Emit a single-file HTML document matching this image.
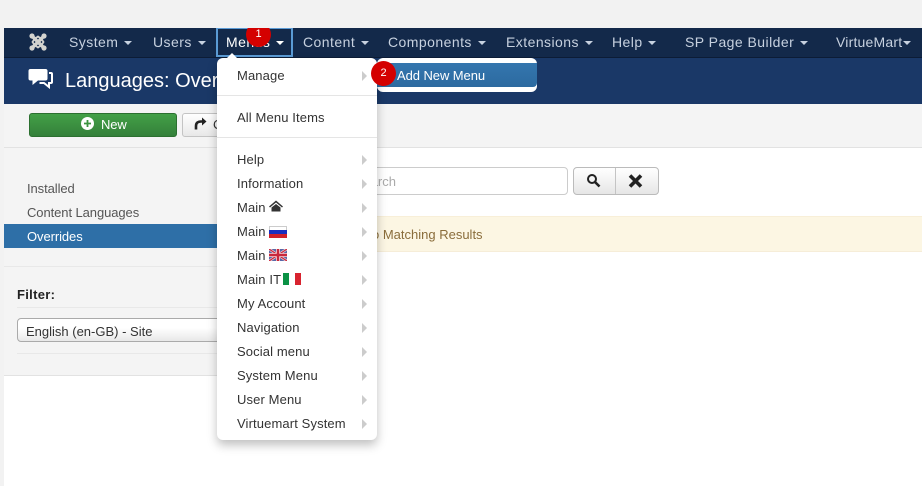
<!DOCTYPE html>
<html><head><meta charset="utf-8">
<style>
html,body{margin:0;padding:0;width:922px;height:486px;overflow:hidden;background:#fff;font-family:"Liberation Sans",sans-serif;font-size:13px;color:#333}
.a{position:absolute;white-space:nowrap}
.nav{position:absolute;top:28px;line-height:28px;font-size:14px;color:#c7d1df;white-space:nowrap;letter-spacing:.45px}
.nav i{display:inline-block;width:0;height:0;border-left:4px solid transparent;border-right:4px solid transparent;border-top:4px solid #c7d1df;vertical-align:middle;margin-left:1.5px}
.m{position:absolute;left:237px;font-size:13px;line-height:20px;color:#333;white-space:nowrap;letter-spacing:.12px}
.ar{position:absolute;left:362px;width:0;height:0;border-left:5px solid #ccc;border-top:5px solid transparent;border-bottom:5px solid transparent}
.side{position:absolute;left:27px;font-size:13px;line-height:20px;color:#555;letter-spacing:-.08px}
.hr{position:absolute;left:217px;width:160px;height:1px;background:#e5e5e5}
svg{position:absolute;display:block}
.b{position:absolute;border-radius:50%;background:#d40000;color:#fff;text-align:center;font-size:11px}
</style></head><body>
<div class="a" style="left:0;top:0;width:922px;height:28px;background:#f2f2f2"></div>
<div class="a" style="left:0;top:0;width:4px;height:486px;background:#f2f2f2"></div>
<div class="a" style="left:4px;top:28px;width:918px;height:30px;background:#13294a"></div>
<div class="a" style="left:4px;top:57px;width:918px;height:1px;background:#0c1c36"></div>
<div class="a" style="left:4px;top:58px;width:918px;height:46px;background:#1a3867"></div>
<div class="a" style="left:4px;top:104px;width:918px;height:43px;background:#f4f4f4"></div>
<div class="a" style="left:4px;top:147px;width:918px;height:1px;background:#e2e2e2"></div>
<div class="a" style="left:4px;top:148px;width:213px;height:227px;background:#f4f4f4"></div>
<div class="a" style="left:4px;top:375px;width:213px;height:1px;background:#e2e2e2"></div>

<svg style="left:29px;top:33px" width="18" height="18" viewBox="0 0 18 18"><path d="M3 3L15 15M15 3L3 15" stroke="#d3d3cf" stroke-width="3.4" fill="none"/><path d="M5.500 6L9 3.500L12.500 6L14.500 9L12.500 12L9 14.500L5.500 12L3.500 9Z" fill="none" stroke="#d3d3cf" stroke-width="1.800"/><g fill="#d3d3cf"><circle cx="3" cy="3" r="2.600"/><circle cx="15" cy="3" r="2.600"/><circle cx="3" cy="15" r="2.600"/><circle cx="15" cy="15" r="2.600"/></g></svg>

<div class="nav" style="left:69px">System <i></i></div>
<div class="nav" style="left:153px">Users <i></i></div>
<div class="nav" style="left:226px;color:#fff">Menus <i style="border-top-color:#fff"></i></div>
<div class="nav" style="left:303px">Content <i></i></div>
<div class="nav" style="left:388px">Components <i></i></div>
<div class="nav" style="left:506px">Extensions <i></i></div>
<div class="nav" style="left:612px">Help <i></i></div>
<div class="nav" style="left:685px">SP Page Builder <i></i></div>
<div class="nav" style="left:836px;letter-spacing:.2px">VirtueMart<i style="margin-left:1px"></i></div>
<div class="a" style="left:216px;top:28px;width:73px;height:26px;border:2px solid #5b9bd5;border-top-width:1px"></div>
<div class="a" style="left:240px;top:28px;width:36px;height:20px;overflow:hidden"><div class="b" style="left:6px;top:-6px;width:25px;height:25px;line-height:24px">1</div></div>

<svg style="left:28px;top:68px" width="25" height="22" viewBox="0 0 25 22"><path d="M2.500 1H17.500Q19.500 1 19.500 3V10.500Q19.500 12.500 17.500 12.500H10L4.500 17V12.500H2.500Q0.500 12.500 0.500 10.500V3Q0.500 1 2.500 1Z" fill="#fff"/><path d="M21 5H23Q24 5 24 6V14Q24 15 23 15H21V19L16 15H11.500" fill="none" stroke="#fff" stroke-width="2"/></svg>
<div class="a" style="left:65px;top:68px;font-size:20px;line-height:26px;color:#fff">Languages: Overrides</div>

<div class="a" style="left:29px;top:113px;width:146px;height:22px;border:1px solid #2c7030;border-radius:3px;background:linear-gradient(#43a047,#34803a)"></div>
<svg style="left:81px;top:117px" width="13" height="13" viewBox="0 0 13 13"><circle cx="6.500" cy="6.500" r="6.500" fill="#fff"/><path d="M6.500 3V10M3 6.500H10" stroke="#3c9440" stroke-width="1.800"/></svg>
<div class="a" style="left:101px;top:115px;line-height:20px;color:#fff;font-size:13px;letter-spacing:-.1px">New</div>
<div class="a" style="left:182px;top:113px;width:60px;height:22px;border:1px solid #c4c4c4;border-radius:3px;background:linear-gradient(#fff,#e8e8e8)"></div>
<svg style="left:193px;top:117px" width="14" height="14" viewBox="0 0 14 14"><path d="M3 12.500V9Q3 4.500 8 4.500H10" fill="none" stroke="#222" stroke-width="2.600"/><path d="M9 0.500L13.500 4.500L9 8.500Z" fill="#222"/></svg>
<div class="a" style="left:213px;top:115px;line-height:20px">Close</div>

<div class="side" style="top:179px">Installed</div>
<div class="side" style="top:203px">Content Languages</div>
<div class="a" style="left:4px;top:224px;width:213px;height:24px;background:#2e6fa7"></div>
<div class="side" style="top:227px;color:#fff">Overrides</div>
<div class="a" style="left:4px;top:266px;width:213px;height:1px;background:#e8e8e8"></div>
<div class="a" style="left:17px;top:285px;font-size:13px;line-height:20px;font-weight:bold;color:#222;letter-spacing:.3px">Filter:</div>
<div class="a" style="left:17px;top:307px;width:200px;height:1px;background:#e8e8e8"></div>
<div class="a" style="left:17px;top:318px;width:220px;height:22px;border:1px solid #aaa;border-radius:4px;background:linear-gradient(#fff 40%,#e8e8e8)"></div>
<div class="a" style="left:26px;top:322px;line-height:20px;color:#333;font-size:13px;letter-spacing:0">English (en-GB) - Site</div>
<div class="a" style="left:17px;top:353px;width:200px;height:1px;background:#e8e8e8"></div>

<div class="a" style="left:300px;top:167px;width:266px;height:26px;border:1px solid #ccc;border-radius:4px;background:#fff"></div>
<div class="a" style="left:310px;top:172px;line-height:20px;color:#aaa;font-size:13px;width:86px;text-align:right">Search</div>
<div class="a" style="left:573px;top:167px;width:84px;height:26px;border:1px solid #bbb;border-radius:4px;background:linear-gradient(#fff,#e6e6e6)"></div>
<div class="a" style="left:615px;top:168px;width:1px;height:26px;background:#c4c4c4"></div>
<svg style="left:586px;top:173px" width="15" height="15" viewBox="0 0 15 15"><circle cx="6" cy="6" r="4" fill="none" stroke="#222" stroke-width="2"/><path d="M9 9L13.500 13.500" stroke="#222" stroke-width="2.600"/></svg>
<svg style="left:628px;top:174px" width="15" height="14" viewBox="0 0 15 14"><path d="M2 1.500L13 12.500M13 1.500L2 12.500" stroke="#222" stroke-width="3.600"/></svg>

<div class="a" style="left:300px;top:216px;width:622px;height:36px;background:#fcf6e3;box-sizing:border-box;border-top:1px solid #f8efd8;border-bottom:1px solid #f6edd8"></div>
<div class="a" style="left:372px;top:225px;line-height:20px;color:#8a6d3b;font-size:13px;letter-spacing:0">o Matching Results</div>

<div class="a" style="left:377px;top:58px;width:160px;height:34px;background:#fff;border-radius:6px"></div>
<div class="a" style="left:377px;top:63px;width:160px;height:24px;background:linear-gradient(#3476ae,#2c6aa0);border-radius:0 0 4px 0"></div>
<div class="a" style="left:397px;top:66px;line-height:20px;color:#fff;font-size:13px;letter-spacing:-.07px">Add New Menu</div>

<div class="a" style="left:217px;top:58px;width:160px;height:382px;background:#fff;border-radius:6px;box-shadow:0 5px 10px rgba(0,0,0,.25)"></div>
<div class="a" style="left:226px;top:53px;width:0;height:0;border-left:6px solid transparent;border-right:6px solid transparent;border-bottom:6px solid #fff"></div>

<div class="m" style="top:66px">Manage</div><div class="ar" style="top:71px"></div>
<div class="hr" style="top:95px"></div>
<div class="m" style="top:108px">All Menu Items</div>
<div class="hr" style="top:137px"></div>
<div class="m" style="top:150px">Help</div><div class="ar" style="top:155px"></div>
<div class="m" style="top:174px">Information</div><div class="ar" style="top:179px"></div>
<div class="m" style="top:198px">Main</div><div class="ar" style="top:203px"></div>
<svg style="left:269px;top:200px" width="14" height="12" viewBox="0 0 14 12"><path d="M7 0.500L0 6.500L1 7.500L7 2.500L13 7.500L14 6.500Z" fill="#333"/><path d="M2.500 7.500L7 4L11.500 7.500V11.500H2.500Z" fill="#333"/></svg>
<div class="m" style="top:222px">Main</div><div class="ar" style="top:227px"></div>
<svg style="left:269px;top:226px" width="18" height="12" viewBox="0 0 18 12"><rect width="18" height="12" fill="#fff"/><rect x=".5" y=".5" width="17" height="4" fill="#fff" stroke="#ccc"/><rect y="4" width="18" height="4" fill="#1a2fc0"/><rect y="8" width="18" height="4" fill="#d0202a"/></svg>
<div class="m" style="top:246px">Main</div><div class="ar" style="top:251px"></div>
<svg style="left:269px;top:249px" width="18" height="12" viewBox="0 0 18 12"><rect width="18" height="12" fill="#5a68a8"/><path d="M0 0L18 12M18 0L0 12" stroke="#f4d0d4" stroke-width="2.600"/><path d="M0 0L18 12M18 0L0 12" stroke="#c8283c" stroke-width="1.200"/><path d="M9 0V12M0 6H18" stroke="#f4d8dc" stroke-width="4"/><path d="M9 0V12M0 6H18" stroke="#c8283c" stroke-width="2.400"/></svg>
<div class="m" style="top:270px">Main IT</div><div class="ar" style="top:275px"></div>
<svg style="left:283px;top:273px" width="18" height="12" viewBox="0 0 18 12"><rect width="6" height="12" fill="#0a9245"/><rect x="6" width="6" height="12" fill="#fff"/><rect x="12" width="6" height="12" fill="#d8232f"/></svg>
<div class="m" style="top:294px">My Account</div><div class="ar" style="top:299px"></div>
<div class="m" style="top:318px">Navigation</div><div class="ar" style="top:323px"></div>
<div class="m" style="top:342px">Social menu</div><div class="ar" style="top:347px"></div>
<div class="m" style="top:366px">System Menu</div><div class="ar" style="top:371px"></div>
<div class="m" style="top:390px">User Menu</div><div class="ar" style="top:395px"></div>
<div class="m" style="top:414px">Virtuemart System</div><div class="ar" style="top:419px"></div>

<div class="b" style="left:371px;top:61px;width:25px;height:25px;line-height:25px">2</div>
</body></html>
